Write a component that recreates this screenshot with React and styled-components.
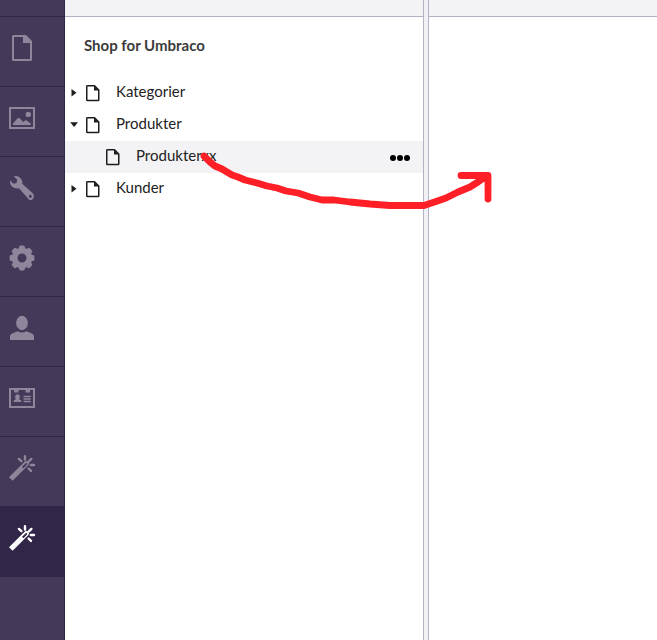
import React from "react";
import styled, { createGlobalStyle } from "styled-components";

const GlobalStyle = createGlobalStyle`
  * {
    box-sizing: border-box;
  }
  body {
    margin: 0;
    font-family: Lato, "Liberation Sans", sans-serif;
    background: #fff;
  }
`;

const Layout = styled.div`
  position: relative;
  display: flex;
  width: 657px;
  height: 640px;
  overflow: hidden;
`;

const Sidebar = styled.nav`
  width: 65px;
  flex: none;
  background: #443959;
  border-right: 1px solid #322648;
`;

const SidebarTop = styled.div`
  height: 17px;
  border-bottom: 1px solid #322648;
`;

const Section = styled.a`
  display: flex;
  height: 70px;
  padding: 17px 0 0 8px;
  color: ${({ $active }) => ($active ? "#fff" : "#8e869b")};
  background: ${({ $active }) => ($active ? "#322648" : "transparent")};
  border-bottom: 1px solid #322648;
`;

const TreePane = styled.div`
  width: 358px;
  flex: none;
`;

const TopBar = styled.div`
  height: 17px;
  background: #f3f3f5;
  border-bottom: 1px solid #b3b1c2;
`;

const Splitter = styled.div`
  width: 6px;
  flex: none;
  background: #f1f1f5;
  border-left: 1px solid #b3b1c2;
  border-right: 1px solid #b3b1c2;
`;

const Content = styled.main`
  flex: 1;
`;

const TreeTitle = styled.h5`
  margin: 0;
  height: 60px;
  padding: 18px 0 0 19px;
  font-size: 15px;
  line-height: 20px;
  font-weight: 700;
  color: #3c3c3c;
`;

const TreeRow = styled.div`
  display: flex;
  align-items: center;
  height: 32px;
  padding: 0 13px 0 ${({ $level }) => 5 + $level * 20}px;
  background: ${({ $selected }) => ($selected ? "#f3f3f5" : "transparent")};
`;

const Caret = styled.span`
  display: flex;
  width: 15px;
  height: 16px;
  flex: none;
`;

const TreeLabel = styled.span`
  flex: 1;
  margin-left: 10px;
  padding-bottom: 4px;
  font-size: 15px;
  line-height: 20px;
  color: #222;
`;

const Options = styled.span`
  display: flex;
  gap: 1px;
  margin-top: 1px;

  & > i {
    width: 6px;
    height: 6px;
    border-radius: 50%;
    background: #000;
  }
`;

const Drawing = styled.svg`
  position: absolute;
  top: 0;
  left: 0;
  pointer-events: none;
`;

const Icon = ({ children }) => (
  <svg width="28" height="28" viewBox="0 0 28 28" fill="currentColor">
    {children}
  </svg>
);

const DocumentIcon = () => (
  <Icon>
    <path
      fillRule="evenodd"
      d="M6 1H18L24 7V25.5Q24 27 22.5 27H5.500Q4 27 4 25.500V2.500Q4 1 5.500 1ZM6 3V25H22V9H15V3Z"
    />
  </Icon>
);

const PictureIcon = () => (
  <Icon>
    <path fillRule="evenodd" d="M1 3H27V25H1ZM3 5V23H25V5Z" />
    <circle cx="20.300" cy="10.400" r="2.700" />
    <path d="M5 21V19.500L10 13.700L12 14.500L15 18L18 16L22.700 19.500V21Z" />
  </Icon>
);

const WrenchIcon = () => (
  <Icon>
    <path
      fillRule="evenodd"
      d="M5.700 2.300Q8.500 1.500 10.800 2.700L13.500 5.500Q14.800 7.500 14.200 9.700L25.300 19.800Q26.500 22 25.500 24.300Q23.800 26.700 21.300 26L11 14.200Q8.500 15 5.500 13.500Q1.200 11 2.200 6.500L5.500 9.700L8.500 9L9.300 5.800ZM22.300 20.700A1.500 1.500 0 1 0 22.300 23.700A1.500 1.500 0 1 0 22.300 20.700Z"
    />
  </Icon>
);

const CogIcon = () => (
  <Icon>
    <circle cx="14" cy="14" r="7.400" fill="none" stroke="currentColor" strokeWidth="5.800" />
    {[0, 45, 90, 135, 180, 225, 270, 315].map((deg) => (
      <path
        key={deg}
        d="M10.500 5.500L11.300 2.400Q11.500 1.600 12.300 1.600H15.700Q16.500 1.600 16.700 2.400L17.500 5.500Z"
        transform={`rotate(${deg} 14 14)`}
      />
    ))}
  </Icon>
);

const UserIcon = () => (
  <Icon>
    <ellipse cx="14" cy="9" rx="5.900" ry="7.200" />
    <path d="M2 26V22Q2 20.500 4 19.500L9.700 17.200Q14 20 18.300 17.200L24 19.500Q26 20.500 26 22V26Z" />
  </Icon>
);

const CardIcon = () => (
  <Icon>
    <path fillRule="evenodd" d="M1 4H27V24H1ZM3 6V22H25V6Z" />
    <path d="M6 5H10.500V8.500H6ZM17.500 5H22V8.500H17.500Z" />
    <ellipse cx="9.500" cy="13" rx="2.300" ry="2.700" />
    <path d="M5.700 18V16.300L8.500 15H10.500L13.200 16.300V18ZM15.500 11.700H22.700V13.200H15.500ZM15.500 14.200H22.700V15.700H15.500ZM15.500 16.700H22.700V18.200H15.500Z" />
  </Icon>
);

const WandIcon = () => (
  <Icon>
    <path
      fillRule="evenodd"
      d="M1 23.200L16.800 7.600Q18.600 6.200 20 7.500Q21.700 9 20.600 10.800L4.600 26.800ZM14 12.800L15.500 14.200L19.200 10.300Q19.600 9.400 18.300 8.700Z"
    />
    <path
      d="M17 2.300V5.600M10.900 4.900L13.400 7.200M23.400 4.900L20.900 7.400M22.800 11H26M20.600 14.500L23 16.900"
      fill="none"
      stroke="currentColor"
      strokeWidth="2.400"
      strokeLinecap="round"
    />
  </Icon>
);

const FileIcon = () => (
  <svg width="21" height="18" viewBox="0 0 21 18">
    <path
      d="M2.200 1.750H9.500L13.750 6V15.900Q13.750 16.550 13.100 16.550H2.400Q1.750 16.550 1.750 15.900V2.400Q1.750 1.750 2.400 1.750Z"
      fill="none"
      stroke="#1d1d1d"
      strokeWidth="1.500"
    />
    <path d="M9 1.500V6.500H14Z" fill="#1d1d1d" />
  </svg>
);

const sections = [
  { name: "content", icon: DocumentIcon },
  { name: "media", icon: PictureIcon },
  { name: "settings", icon: WrenchIcon },
  { name: "developer", icon: CogIcon },
  { name: "users", icon: UserIcon },
  { name: "members", icon: CardIcon },
  { name: "forms", icon: WandIcon },
  { name: "shop", icon: WandIcon, active: true },
];

const nodes = [
  { label: "Kategorier", level: 0, caret: "right" },
  { label: "Produkter", level: 0, caret: "down" },
  { label: "Produkterxx", level: 1, selected: true },
  { label: "Kunder", level: 0, caret: "right" },
];

const carets = {
  right: "M5.500 4L10.500 7.700L5.500 11.400Z",
  down: "M4.200 5.200H12L8.100 10Z",
};

function App() {
  return (
    <Layout>
      <GlobalStyle />
      <Sidebar>
        <SidebarTop />
        {sections.map(({ name, icon: SectionIcon, active }) => (
          <Section key={name} $active={active}>
            <SectionIcon />
          </Section>
        ))}
      </Sidebar>
      <TreePane>
        <TopBar />
        <TreeTitle>Shop for Umbraco</TreeTitle>
        {nodes.map(({ label, level, caret, selected }) => (
          <TreeRow key={label} $level={level} $selected={selected}>
            <Caret>
              {caret && (
                <svg width="15" height="16" viewBox="0 0 15 16">
                  <path d={carets[caret]} transform="translate(-4 0)" fill="#1d1d1d" />
                </svg>
              )}
            </Caret>
            <FileIcon />
            <TreeLabel>{label}</TreeLabel>
            {selected && (
              <Options>
                <i />
                <i />
                <i />
              </Options>
            )}
          </TreeRow>
        ))}
      </TreePane>
      <Splitter />
      <Content>
        <TopBar />
      </Content>
      <Drawing width="657" height="640" viewBox="0 0 657 640">
        <path
          d="M204 156L210 162L215 166L222 169L232 175L238 177L245 180L257 183L267 186L277 188L286 191L298 193L310 197L322 200L334 200L350 202L370 204L390 205.500H424L436 201.500L446 198L458 192L470 187L478 182L485 177M461 175.500H488V199"
          fill="none"
          stroke="#ff1f27"
          strokeWidth="6.800"
          strokeLinecap="round"
          strokeLinejoin="round"
        />
      </Drawing>
    </Layout>
  );
}

export default App;
